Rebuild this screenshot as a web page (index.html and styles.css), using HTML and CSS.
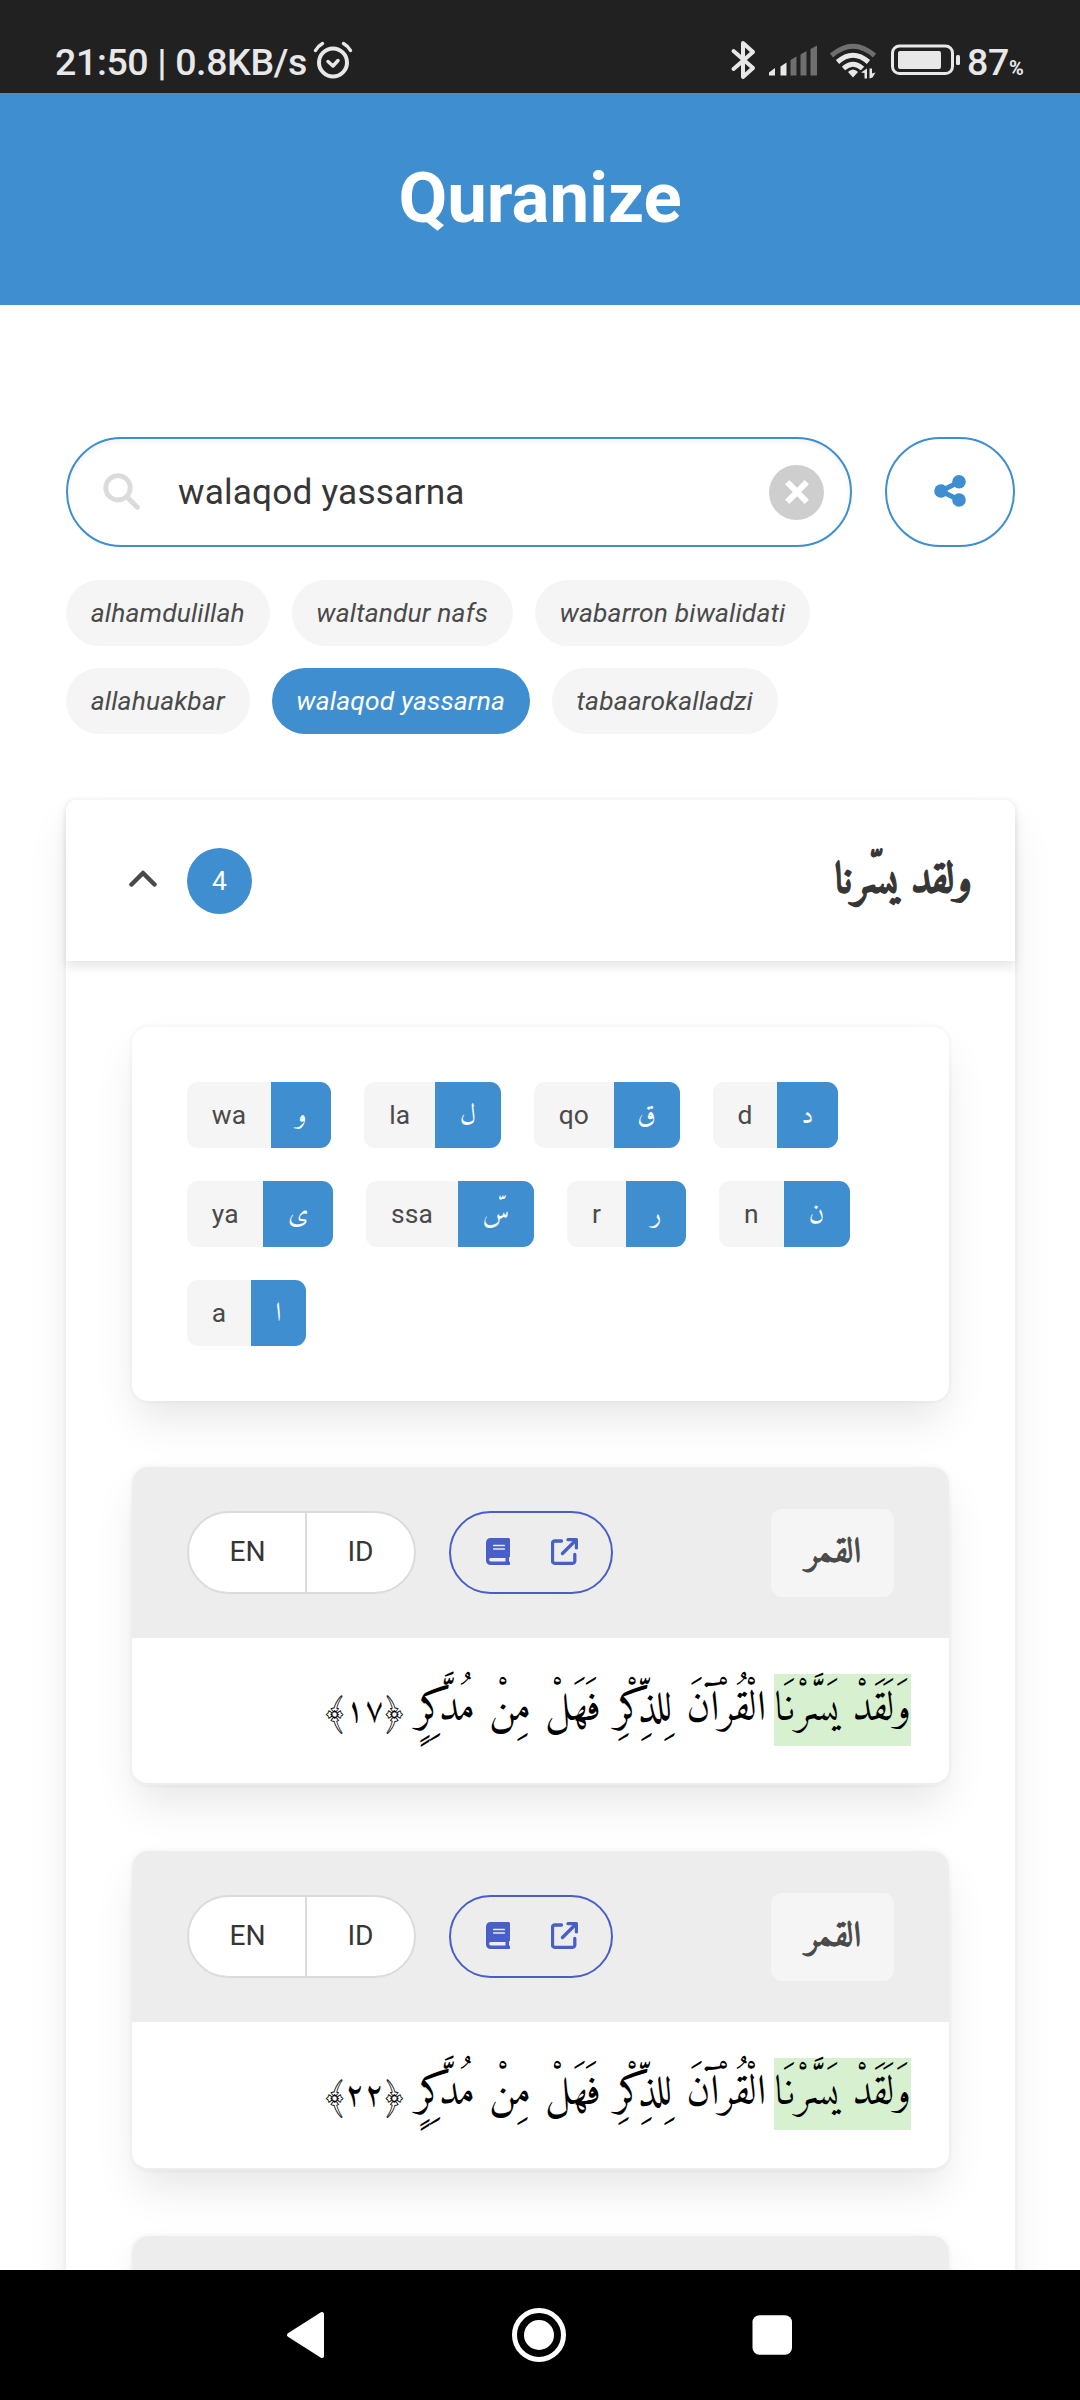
FILE: index.html
```html
<!DOCTYPE html>
<html lang="en">
<head>
<meta charset="utf-8">
<title>Quranize</title>
<link rel="stylesheet" href="styles.css">
</head>
<body>
<svg class="defs" width="0" height="0">
  <symbol id="book" viewBox="0 0 24 27"><path fill-rule="evenodd" d="M4.500 0H22.500A1.500 1.500 0 0 1 24 1.500V18a1.500 1.500 0 0 1-1 1.500V23.600a1.700 1.700 0 0 1-.5 3.400H4.500A4.500 4.500 0 0 1 0 22.500V4.500A4.500 4.500 0 0 1 4.500 0ZM4.800 20a1.700 1.700 0 0 0 0 3.500H19.500V20ZM7.700 6.700a.75.75 0 0 0 0 1.500H18.300a.75.75 0 0 0 0-1.500ZM7.700 10.300a.75.75 0 0 0 0 1.500H18.300a.75.75 0 0 0 0-1.500Z" fill="currentColor"/></symbol>
  <symbol id="external" viewBox="0 0 27 27"><path d="M10.500 3H3.700A2.200 2.200 0 0 0 1.500 5.200V23.100A2.200 2.200 0 0 0 3.700 25.300H21.600A2.200 2.200 0 0 0 23.800 23.100V16.500M11.500 15.500 24 3" fill="none" stroke="currentColor" stroke-width="3.300" stroke-linecap="round"/><path d="M17 0H25.500A1.500 1.500 0 0 1 27 1.500V10a1.600 1.600 0 0 1-3.200 0V3.300H17A1.600 1.600 0 0 1 17 0Z" fill="currentColor"/></symbol>
</svg>
<div class="screen">
  <div class="statusbar">
    <span class="clock">21:50 | 0.8KB/s</span>
    <svg class="alarm" width="40" height="38" viewBox="0 0 40 38"><g fill="none" stroke="#e8e8e8" stroke-linecap="round"><circle cx="20" cy="21.500" r="14" stroke-width="4"/><path d="M15 20.500 20 25 25 19.500" stroke-width="3.500" stroke-linejoin="round"/><path d="M2.500 9.500Q5 5 9.500 2.500M37.500 9.500Q35 5 30.500 2.500" stroke-width="3.500"/></g></svg>
    <svg class="status-icons" width="230" height="40" viewBox="0 0 230 40">
      <path d="M3.500 11 23 28 13 37V3L23 12 3.500 29" fill="none" stroke="#e8e8e8" stroke-width="4" stroke-linejoin="round" stroke-linecap="round"/>
      <g fill="#e8e8e8"><path d="M39 35.500V32.500L45 28V35.500ZM50.500 35.500V26.500L56.500 22.500V35.500Z"/></g>
      <g fill="#6f6f6f"><path d="M60.500 35.500V20L66.500 16.500V35.500ZM70.500 35.500V14.500L76.500 11V35.500ZM80.500 35.500V9L87 5.500V35.500Z"/></g>
      <g fill="none" stroke-width="5"><path d="M101.500 15.500Q123 -3 144.500 15.500" stroke="#6f6f6f"/><path d="M107.500 22Q123 8.500 138.500 22M113.500 28.500Q123 20 132.500 28.500" stroke="#e8e8e8"/></g>
      <g fill="#e8e8e8"><path d="M123 29.500Q126.500 30 128 32L123 37.500 118 32Q119.500 30 123 29.500Z"/><path d="M131 32.500 137 28.500V38.500H134.500V33ZM139.500 28.500H142V33.500L145.500 32.500 142.500 37.500 139.500 38.500Z"/></g>
      <rect x="162.500" y="6" width="60" height="27.500" rx="7" fill="none" stroke="#e8e8e8" stroke-width="3"/>
      <rect x="168" y="11" width="43" height="18" rx="2" fill="#e8e8e8"/><rect x="226" y="15" width="4" height="10" rx="1.500" fill="#e8e8e8"/>
    </svg>
    <span class="battery">87<small>%</small></span>
  </div>
  <header class="hero"><h1>Quranize</h1></header>
  <main class="content">
    <div class="search-row">
      <div class="search">
        <svg width="37" height="37" viewBox="0 0 37 37"><path d="M25 25 34.300 34.300" stroke="#dbdbdb" stroke-width="5" stroke-linecap="round"/><circle cx="15" cy="14.800" r="12.200" fill="none" stroke="#dbdbdb" stroke-width="4.800"/></svg>
        <span class="query">walaqod yassarna</span>
        <span class="clear"><svg width="24" height="24" viewBox="0 0 24 24"><path d="M2.200 2.200 21.800 21.800M21.800 2.200 2.200 21.800" stroke="#fff" stroke-width="6"/></svg></span>
      </div>
      <div class="share"><svg width="32" height="32" viewBox="0 0 32 32" fill="#3e8ed0"><path d="M25 7 7 16 25 25" fill="none" stroke="#3e8ed0" stroke-width="5"/><circle cx="25" cy="6.800" r="6.800"/><circle cx="7" cy="16" r="6.800"/><circle cx="25" cy="25" r="6.800"/></svg></div>
    </div>
    <div class="chips">
      <span class="chip">alhamdulillah</span><span class="chip">waltandur nafs</span><span class="chip">wabarron biwalidati</span>
      <span class="chip">allahuakbar</span><span class="chip active">walaqod yassarna</span><span class="chip">tabaarokalladzi</span>
    </div>
    <section class="result">
      <div class="result-head">
        <svg class="chevron" width="28" height="18" viewBox="0 0 28 18"><path d="M2.500 14.500 14 3 25.500 14.500" fill="none" stroke="#4a4a4a" stroke-width="4.500" stroke-linecap="round" stroke-linejoin="round"/></svg>
        <span class="count">4</span>
        <h2 lang="ar" dir="rtl">ولقد يسّرنا</h2>
      </div>
      <div class="result-body">
        <div class="letters">
          <span class="pair">wa<b class="s">و</b></span><span class="pair">la<b class="m">ل</b></span><span class="pair">qo<b class="m">ق</b></span><span class="pair">d<b class="s">د</b></span>
          <span class="pair">ya<b class="l">ى</b></span><span class="pair">ssa<b class="xl">سّ</b></span><span class="pair">r<b class="s">ر</b></span><span class="pair">n<b class="m">ن</b></span>
          <span class="pair">a<b class="xs">ا</b></span>
        </div>
        <article class="verse">
          <div class="verse-head">
            <div class="langs"><span>EN</span><span>ID</span></div>
            <div class="links"><svg width="24" height="27"><use href="#book"/></svg><svg width="27" height="27"><use href="#external"/></svg></div>
            <span class="sura" lang="ar">القمر</span>
          </div>
          <p class="verse-text" lang="ar" dir="rtl"><mark>وَلَقَدْ يَسَّرْنَا</mark> الْقُرْآنَ لِلذِّكْرِ فَهَلْ مِنْ مُدَّكِرٍ <span class="number">﴿١٧﴾</span></p>
        </article>
        <article class="verse">
          <div class="verse-head">
            <div class="langs"><span>EN</span><span>ID</span></div>
            <div class="links"><svg width="24" height="27"><use href="#book"/></svg><svg width="27" height="27"><use href="#external"/></svg></div>
            <span class="sura" lang="ar">القمر</span>
          </div>
          <p class="verse-text" lang="ar" dir="rtl"><mark>وَلَقَدْ يَسَّرْنَا</mark> الْقُرْآنَ لِلذِّكْرِ فَهَلْ مِنْ مُدَّكِرٍ <span class="number">﴿٢٢﴾</span></p>
        </article>
        <article class="verse"><div class="verse-head"></div></article>
      </div>
    </section>
  </main>
  <nav class="navbar">
    <svg width="1080" height="130" viewBox="0 0 1080 130" fill="#fff"><path d="M289 65 322 44V86Z" stroke="#fff" stroke-width="4" stroke-linejoin="round"/><circle cx="539" cy="65" r="24.500" fill="none" stroke="#fff" stroke-width="5"/><circle cx="539" cy="65" r="15"/><rect x="752.500" y="45.300" width="39.500" height="39.500" rx="7"/></svg>
  </nav>
</div>
</body>
</html>
```
FILE: styles.css
```css
* { box-sizing: border-box; }
body { margin: 0; background: #fff; font-family: Roboto, sans-serif; color: #4a4a4a; }
.defs { position: absolute; }
svg { display: block; flex: none; }
h1, h2, p { margin: 0; }
.screen { width: 1080px; height: 2400px; display: flex; flex-direction: column; overflow: hidden; }

.statusbar { height: 93px; flex: none; display: flex; align-items: flex-start; background: #212121; color: #e8e8e8; padding-left: 55px; }
.clock { width: 258px; margin-top: 40px; font-size: 37.500px; line-height: 44px; font-weight: 500; letter-spacing: -.37px; white-space: nowrap; }
.alarm { margin-top: 41px; }
.status-icons { margin: 40px 0 0 377px; }
.battery { margin: 40px 0 0 7px; font-size: 37.500px; line-height: 44px; font-weight: 500; letter-spacing: -.3px; white-space: nowrap; }
.battery small { font-size: 20px; font-weight: 700; }

.hero { height: 212px; flex: none; display: flex; justify-content: center; align-items: center; background: #3e8ed0; color: #fff; }
.hero h1 { font-size: 70.800px; font-weight: 700; line-height: 80px; padding-bottom: 2px; }

.content { flex: 1; min-height: 0; overflow: hidden; padding: 132px 65px 0 66px; }
.search-row { display: flex; gap: 33px; }
.search { flex: 1; height: 110px; display: flex; align-items: center; border: 2px solid #3e8ed0; border-radius: 55px; padding: 0 26px 0 35px; box-shadow: inset 0 2.750px 5.500px rgba(10,10,10,.05); }
.search > svg { margin-bottom: 2px; }
.query { flex: 1; padding-left: 38px; font-size: 35.200px; letter-spacing: .2px; color: #363636; }
.clear { width: 55px; height: 55px; border-radius: 50%; background: #cecece; display: flex; align-items: center; justify-content: center; }
.share { width: 130px; height: 110px; border: 2px solid #3e8ed0; border-radius: 55px; display: flex; align-items: center; justify-content: center; padding-bottom: 3px; }

.chips { display: flex; flex-wrap: wrap; gap: 22px; margin-top: 33px; width: 800px; }
.chip { height: 66px; line-height: 66px; padding: 0 24.750px; border-radius: 33px; background: #f5f5f5; font-size: 26.400px; font-style: italic; letter-spacing: .15px; }
.chip.active { background: #3e8ed0; color: #fff; }

.result { margin-top: 66px; border-radius: 11px; box-shadow: 0 22px 44px -5.500px rgba(10,10,10,.1), 0 0 0 2.750px rgba(10,10,10,.02); }
.result-head { height: 161px; display: flex; align-items: center; padding: 0 43px 0 63px; border-radius: 11px 11px 0 0; box-shadow: 0 5.500px 11px rgba(10,10,10,.1); }
.chevron { margin-bottom: 3px; }
.count { width: 65px; height: 66px; margin-left: 30px; border-radius: 50%; background: #3e8ed0; color: #fff; text-align: center; line-height: 66px; font-size: 26.400px; }
h2, .sura, .verse-text, .pair b { font-family: Amiri, "Scheherazade New", "Noto Naskh Arabic", "DejaVu Sans", sans-serif; }
.result-head h2 { margin-left: auto; padding-top: 2px; font-size: 43px; line-height: 60px; color: #363636; white-space: nowrap; -webkit-text-stroke: 1.200px #363636; }
.result-body { padding: 66px; display: flex; flex-direction: column; gap: 66px; }

.letters { display: flex; flex-wrap: wrap; gap: 33px; padding: 55px; height: 374px; border-radius: 16.500px; box-shadow: 0 22px 44px -5.500px rgba(10,10,10,.1), 0 0 0 2.750px rgba(10,10,10,.02); }
.pair { display: flex; height: 66px; line-height: 66px; padding-left: 24.750px; border-radius: 11px; overflow: hidden; background: #f5f5f5; font-size: 26.400px; letter-spacing: .1px; }
.pair b { margin-left: 24.750px; background: #3e8ed0; color: #fff; font-weight: 400; text-align: center; font-size: 27px; line-height: 69px; }
.xs { width: 55px; } .s { width: 60.500px; } .m { width: 66px; } .l { width: 70px; } .xl { width: 76.500px; }

.verse { height: 318.300px; flex: none; border-radius: 16.500px; box-shadow: 0 22px 44px -5.500px rgba(10,10,10,.1), 0 0 0 2.750px rgba(10,10,10,.02); border-bottom: 2px solid #ededed; }
.verse-head { height: 171px; display: flex; align-items: center; padding: 0 55px; border-radius: 16.500px 16.500px 0 0; background: #ededed; }
.langs { display: flex; width: 229px; height: 83px; border: 2px solid #dbdbdb; border-radius: 42px; background: #fff; color: #363636; font-size: 28.200px; line-height: 78px; text-align: center; overflow: hidden; }
.langs span { flex: 1; }
.langs span:first-child { flex: none; width: 118px; padding: 0 0 0 1px; border-right: 2px solid #dbdbdb; }
.links { display: flex; align-items: center; gap: 41px; width: 164px; height: 83px; margin-left: 33px; padding: 0 0 3px 35px; border: 2px solid #485fc7; border-radius: 42px; color: #485fc7; }
.sura { width: 123px; height: 88px; margin-left: auto; padding-left: 2px; border-radius: 11px; background: #f5f5f5; text-align: center; font-size: 35.200px; line-height: 88px; -webkit-text-stroke: 1.200px #4a4a4a; }
.verse-text { padding: 36px 38px 0 0; color: #000; font-size: 42.100px; line-height: 72px; word-spacing: 1.500px; white-space: nowrap; }
.verse-text mark { display: inline-block; height: 72px; margin-left: -5.500px; background: #d6f0d0; color: #000; font-size: 41px; }
.number { margin-right: -6px; font-size: 33.500px; }

.navbar { height: 130px; flex: none; background: #000; }
```
